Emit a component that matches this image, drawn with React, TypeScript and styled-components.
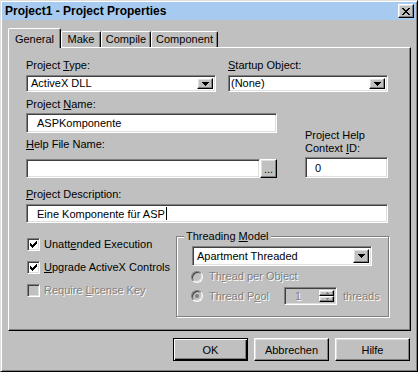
import React from "react";
import styled, { createGlobalStyle, css } from "styled-components";

const GlobalStyle = createGlobalStyle`
  html, body {
    margin: 0;
    padding: 0;
    background: #c0c0c0;
  }
  body {
    font-family: "Liberation Sans", Arial, sans-serif;
    font-size: 11px;
    color: #000;
  }
  * {
    box-sizing: border-box;
  }
`;

const raised = css`
  background: #c0c0c0;
  border: 1px solid;
  border-color: #fff #000 #000 #fff;
  box-shadow: inset -1px -1px #808080, inset 1px 1px #dfdfdf;
`;

const sunken = css`
  border: 1px solid;
  border-color: #808080 #fff #fff #808080;
  box-shadow: inset 1px 1px #404040, inset -1px -1px #dfdfdf;
`;

const disabledText = css`
  color: #808080;
  text-shadow: 1px 1px 0 #fff;
`;

const Window = styled.div`
  width: 418px;
  height: 372px;
  display: flex;
  flex-direction: column;
  padding: 1px;
  background: #c0c0c0;
  border: 1px solid;
  border-color: #dfdfdf #000 #000 #dfdfdf;
  box-shadow: inset 1px 1px #fff, inset -1px -1px #808080;
`;

const TitleBar = styled.div`
  height: 18px;
  display: flex;
  align-items: center;
  justify-content: space-between;
  padding: 0 2px 0 3px;
  background: #a6caf0;
`;

const Title = styled.span`
  font-size: 12px;
  font-weight: bold;
`;

const CloseButton = styled.div`
  ${raised};
  width: 16px;
  height: 14px;
  display: flex;
  align-items: center;
  justify-content: center;
`;

const Body = styled.div`
  flex: 1;
  display: flex;
  flex-direction: column;
  padding: 8px 5px 7px 6px;
`;

const TabRow = styled.div`
  height: 19px;
  display: flex;
  align-items: flex-end;
`;

const Tab = styled.div<{ $w: number; $active?: boolean }>`
  width: ${(p) => p.$w}px;
  height: ${(p) => (p.$active ? 20 : 16)}px;
  margin-bottom: ${(p) => (p.$active ? -1 : 0)}px;
  position: relative;
  z-index: ${(p) => (p.$active ? 1 : 0)};
  display: flex;
  align-items: ${(p) => (p.$active ? "flex-start" : "center")};
  justify-content: center;
  padding-top: ${(p) => (p.$active ? 4 : 0)}px;
  background: #c0c0c0;
  border: 1px solid;
  border-bottom: none;
  border-color: #fff #000 #000 #fff;
  border-radius: 2px 2px 0 0;
  box-shadow: inset -1px 0 #808080;
  line-height: 13px;
`;

const Panel = styled.div`
  height: 284px;
  display: flex;
  flex-direction: column;
  padding: 11px 0 0 17px;
  border: 1px solid;
  border-color: #fff #000 #000 #fff;
  box-shadow: inset -1px -1px #808080;
`;

const Row = styled.div<{ $gap?: number; $top?: number }>`
  display: flex;
  gap: ${(p) => p.$gap ?? 0}px;
  margin-top: ${(p) => p.$top ?? 0}px;
`;

const Column = styled.div<{ $w?: number; $gap?: number; $left?: number }>`
  display: flex;
  flex-direction: column;
  width: ${(p) => (p.$w ? `${p.$w}px` : "auto")};
  gap: ${(p) => p.$gap ?? 0}px;
  margin-left: ${(p) => p.$left ?? 0}px;
`;

const Label = styled.div<{ $top?: number }>`
  line-height: 13px;
  white-space: nowrap;
  margin-top: ${(p) => p.$top ?? 0}px;
`;

const Combo = styled.div<{ $w: number; $h: number }>`
  ${sunken};
  width: ${(p) => p.$w}px;
  height: ${(p) => p.$h}px;
  display: flex;
  align-items: stretch;
  padding: 2px;
  background: #fff;
  line-height: 13px;
`;

const ComboText = styled.span<{ $pad: number }>`
  flex: 1;
  display: flex;
  align-items: center;
  padding-left: ${(p) => p.$pad}px;
`;

const DropButton = styled.div`
  ${raised};
  width: 16px;
  display: flex;
  align-items: center;
  justify-content: center;
`;

const TextBox = styled.div<{ $w: number; $h: number; $pad?: number }>`
  ${sunken};
  width: ${(p) => p.$w}px;
  height: ${(p) => p.$h}px;
  display: flex;
  align-items: center;
  padding-left: ${(p) => p.$pad ?? 10}px;
  background: #fff;
`;

const Caret = styled.span`
  display: inline-block;
  width: 1px;
  height: 13px;
  margin-left: 1px;
  background: #000;
  vertical-align: middle;
`;

const SmallButton = styled.div`
  ${raised};
  width: 17px;
  height: 19px;
  display: flex;
  align-items: flex-end;
  justify-content: center;
  padding-bottom: 3px;
  line-height: 9px;
`;

const CheckRow = styled.div<{ $disabled?: boolean }>`
  display: flex;
  align-items: center;
  gap: 4px;
  height: 13px;
  line-height: 13px;
  white-space: nowrap;
  ${(p) => p.$disabled && disabledText};
`;

const CheckBox = styled.div<{ $disabled?: boolean }>`
  ${sunken};
  width: 13px;
  height: 13px;
  display: flex;
  align-items: center;
  justify-content: center;
  background: ${(p) => (p.$disabled ? "#c0c0c0" : "#fff")};
`;

const GroupBox = styled.fieldset`
  width: 213px;
  height: 87px;
  margin: 0;
  padding: 0;
  border: 1px solid #808080;
  box-shadow: inset 1px 1px #fff, 1px 1px #fff;
`;

const Legend = styled.legend`
  margin-left: 7px;
  padding: 0 2px;
  line-height: 13px;
  background: #c0c0c0;
`;

const GroupInner = styled.div`
  display: flex;
  flex-direction: column;
  padding: 3px 0 0 15px;
`;

const RadioRow = styled.div<{ $h: number; $top: number }>`
  display: flex;
  align-items: center;
  height: ${(p) => p.$h}px;
  margin-top: ${(p) => p.$top}px;
  margin-left: -1px;
  line-height: 13px;
  white-space: nowrap;
`;

const Radio = styled.div<{ $on?: boolean }>`
  width: 12px;
  height: 12px;
  border-radius: 50%;
  border: 1px solid;
  border-color: #808080 #fff #fff #808080;
  box-shadow: inset 1px 1px #404040, inset -1px -1px #dfdfdf;
  background: #c0c0c0;
  display: flex;
  align-items: center;
  justify-content: center;
  margin-right: 6px;

  &::after {
    content: "";
    display: ${(p) => (p.$on ? "block" : "none")};
    width: 4px;
    height: 4px;
    border-radius: 50%;
    background: #808080;
  }
`;

const DisabledText = styled.span<{ $w?: number }>`
  ${disabledText};
  width: ${(p) => (p.$w ? `${p.$w}px` : "auto")};
`;

const SpinBox = styled.div`
  ${sunken};
  width: 53px;
  height: 18px;
  display: flex;
  padding: 2px;
  background: #c0c0c0;
  margin-right: 6px;
`;

const SpinValue = styled.span`
  ${disabledText};
  flex: 1;
  display: flex;
  align-items: center;
  padding-left: 8px;
`;

const SpinButtons = styled.div`
  width: 15px;
  display: flex;
  flex-direction: column;
`;

const SpinPart = styled.div`
  ${raised};
  flex: 1;
  display: flex;
  align-items: center;
  justify-content: center;
`;

const ButtonRow = styled.div`
  display: flex;
  justify-content: flex-end;
  gap: 6px;
  margin-top: 7px;
  padding-right: 1px;
`;

const Button = styled.div<{ $default?: boolean }>`
  ${raised};
  width: 75px;
  height: 23px;
  display: flex;
  align-items: center;
  justify-content: center;
  ${(p) =>
    p.$default &&
    css`
      border-color: #000;
      box-shadow: inset 1px 1px #fff, inset -1px -1px #000,
        inset -2px -2px #808080;
    `};
`;

const Arrow = ({ up, color = "#000" }: { up?: boolean; color?: string }) => (
  <svg width="7" height="4" viewBox="0 0 7 4" shapeRendering="crispEdges">
    <polygon points={up ? "3.5,0 7,4 0,4" : "0,0 7,0 3.5,4"} fill={color} />
  </svg>
);

const SmallArrow = ({ up }: { up?: boolean }) => (
  <svg width="6" height="4" viewBox="0 0 6 4" shapeRendering="crispEdges">
    <polygon points={up ? "3,1 5,3 1,3" : "1,1 5,1 3,3"} fill="#808080" />
  </svg>
);

const CheckMark = () => (
  <svg width="7" height="7" viewBox="0 0 7 7" shapeRendering="crispEdges">
    <path d="M0 2 L2 4 L7 -1 L7 2 L2 7 L0 5 Z" fill="#000" />
  </svg>
);

const CloseIcon = () => (
  <svg width="8" height="7" viewBox="0 0 8 7" shapeRendering="crispEdges">
    <path d="M0 0 L2 0 L4 2.5 L6 0 L8 0 L5 3.5 L8 7 L6 7 L4 4.5 L2 7 L0 7 L3 3.5 Z" fill="#000" />
  </svg>
);

function Check({ label, checked, disabled }: { label: React.ReactNode; checked?: boolean; disabled?: boolean }) {
  return (
    <CheckRow $disabled={disabled}>
      <CheckBox $disabled={disabled}>{checked && <CheckMark />}</CheckBox>
      <span>{label}</span>
    </CheckRow>
  );
}

export default function App() {
  return (
    <>
      <GlobalStyle />
      <Window>
        <TitleBar>
          <Title>Project1 - Project Properties</Title>
          <CloseButton>
            <CloseIcon />
          </CloseButton>
        </TitleBar>
        <Body>
          <TabRow>
            <Tab $w={53} $active>General</Tab>
            <Tab $w={40}>Make</Tab>
            <Tab $w={50}>Compile</Tab>
            <Tab $w={67}>Component</Tab>
          </TabRow>
          <Panel>
            <Row $gap={12}>
              <Column $gap={3}>
                <Label>
                  Project <u>T</u>ype:
                </Label>
                <Combo $w={190} $h={17}>
                  <ComboText $pad={2}>ActiveX DLL</ComboText>
                  <DropButton>
                    <Arrow />
                  </DropButton>
                </Combo>
              </Column>
              <Column $gap={3}>
                <Label>
                  <u>S</u>tartup Object:
                </Label>
                <Combo $w={160} $h={17}>
                  <ComboText $pad={0}>(None)</ComboText>
                  <DropButton>
                    <Arrow />
                  </DropButton>
                </Combo>
              </Column>
            </Row>

            <Row $top={6} style={{ alignItems: "flex-end" }}>
              <Column $w={251}>
                <Label>
                  Project <u>N</u>ame:
                </Label>
                <TextBox $w={251} $h={20} style={{ marginTop: 2 }}>
                  ASPKomponente
                </TextBox>
                <Label $top={5}>
                  <u>H</u>elp File Name:
                </Label>
                <Row $top={8}>
                  <TextBox $w={234} $h={19} />
                  <SmallButton>...</SmallButton>
                </Row>
              </Column>
              <Column $w={83} $left={28} $gap={2}>
                <Label>
                  Project Help
                  <br />
                  Context <u>I</u>D:
                </Label>
                <TextBox $w={83} $h={21} $pad={9}>
                  0
                </TextBox>
              </Column>
            </Row>

            <Column $gap={3} style={{ marginTop: 10 }}>
              <Label>
                <u>P</u>roject Description:
              </Label>
              <TextBox $w={362} $h={19}>
                Eine Komponente für ASP
                <Caret />
              </TextBox>
            </Column>

            <Row $top={7}>
              <Column $w={149} $gap={10} $left={1} style={{ paddingTop: 8 }}>
                <Check
                  checked
                  label={
                    <>
                      Unatt<u>e</u>nded Execution
                    </>
                  }
                />
                <Check
                  checked
                  label={
                    <>
                      <u>U</u>pgrade ActiveX Controls
                    </>
                  }
                />
                <Check
                  disabled
                  label={
                    <>
                      Require <u>L</u>icense Key
                    </>
                  }
                />
              </Column>
              <GroupBox>
                <Legend>
                  Threading <u>M</u>odel
                </Legend>
                <GroupInner>
                  <Combo $w={180} $h={20}>
                    <ComboText $pad={2}>Apartment Threaded</ComboText>
                    <DropButton>
                      <Arrow />
                    </DropButton>
                  </Combo>
                  <RadioRow $h={13} $top={4}>
                    <Radio />
                    <DisabledText>
                      Th<u>r</u>ead per Object
                    </DisabledText>
                  </RadioRow>
                  <RadioRow $h={18} $top={4}>
                    <Radio $on />
                    <DisabledText $w={75}>
                      Thread P<u>o</u>ol
                    </DisabledText>
                    <SpinBox>
                      <SpinValue>1</SpinValue>
                      <SpinButtons>
                        <SpinPart>
                          <SmallArrow up />
                        </SpinPart>
                        <SpinPart>
                          <SmallArrow />
                        </SpinPart>
                      </SpinButtons>
                    </SpinBox>
                    <DisabledText>threads</DisabledText>
                  </RadioRow>
                </GroupInner>
              </GroupBox>
            </Row>
          </Panel>
          <ButtonRow>
            <Button $default>OK</Button>
            <Button>Abbrechen</Button>
            <Button>Hilfe</Button>
          </ButtonRow>
        </Body>
      </Window>
    </>
  );
}
